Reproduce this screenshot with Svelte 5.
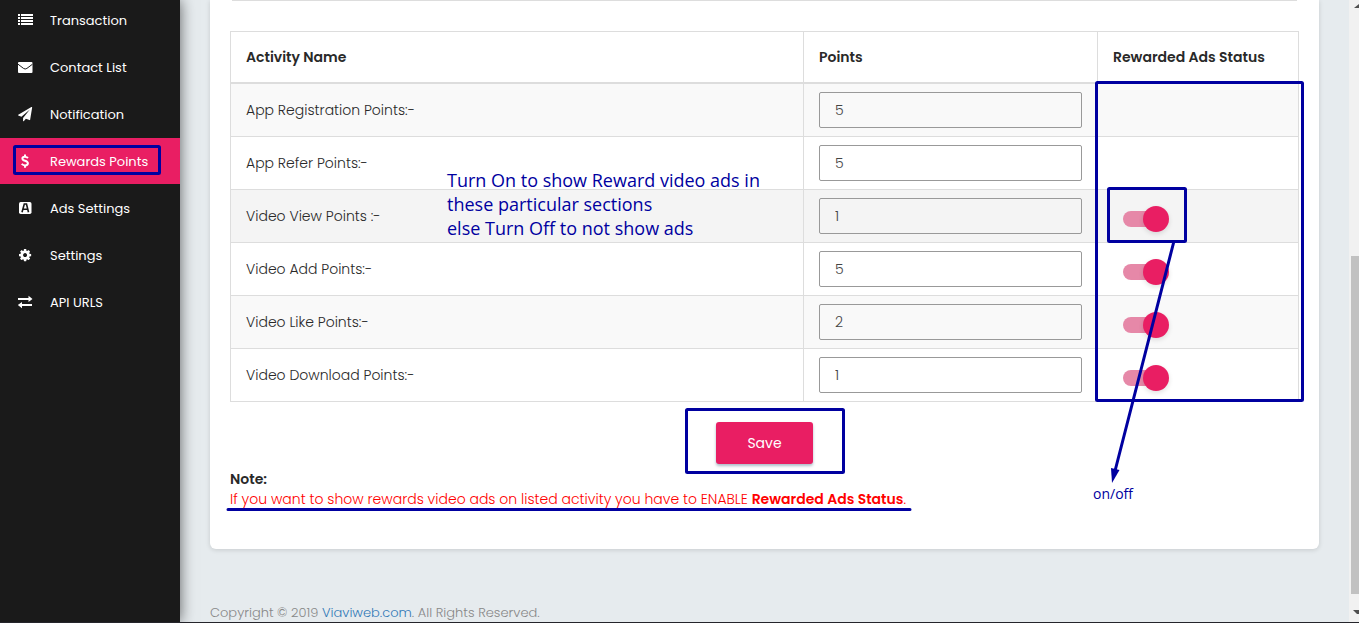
<script>
  const menu = [
    { label: 'Transaction', icon: 'list' },
    { label: 'Contact List', icon: 'envelope' },
    { label: 'Notification', icon: 'plane' },
    { label: 'Rewards Points', icon: 'dollar', active: true },
    { label: 'Ads Settings', icon: 'ads' },
    { label: 'Settings', icon: 'cog' },
    { label: 'API URLS', icon: 'exchange' }
  ];

  let rows = $state([
    { id: 'registration', label: 'App Registration Points:-', points: '5' },
    { id: 'refer', label: 'App Refer Points:-', points: '5' },
    { id: 'view', label: 'Video View Points :-', points: '1', ads: true, hover: true },
    { id: 'add', label: 'Video Add Points:-', points: '5', ads: true },
    { id: 'like', label: 'Video Like Points:-', points: '2', ads: true },
    { id: 'download', label: 'Video Download Points:-', points: '1', ads: true }
  ]);
</script>

<div class="page">
  <nav class="sidebar">
    <ul>
      {#each menu as item}
        <li>
          <a href="#{item.icon}" class:active={item.active}>
            <svg class="icon" viewBox="0 0 16 16" aria-hidden="true">
              {#if item.icon === 'list'}
                <path d="M1 2h2v2H1zM4 2h12v2H4zM1 5h2v2H1zM4 5h12v2H4zM1 8h2v2H1zM4 8h12v2H4zM1 11h2v2H1zM4 11h12v2H4z" />
              {:else if item.icon === 'envelope'}
                <rect x="1" y="3" width="14.500" height="11" rx="1" />
                <path class="cut fold" d="M1 5.200l5.500 4.200q1.700 1.200 3.400 0L15.500 5.200" />
              {:else if item.icon === 'plane'}
                <path transform="translate(1 1) scale(.0079)" d="M1764 11q33 24 27 64l-256 1536q-5 29-32 45-14 8-31 8-11 0-24-5l-453-185-242 295q-18 23-49 23-13 0-22-4-19-7-30.500-23.500t-11.500-36.500v-349l864-1059-1069 925-395-162q-37-14-40-55-2-40 32-59l1664-960q15-9 32-9 20 0 36 11z" />
              {:else if item.icon === 'dollar'}
                <path class="stroke" d="M11 5Q9.600 3.700 7.800 3.700 5.400 3.700 5.400 5.500 5.400 7 8 7.700 10.900 8.500 10.900 10.300 10.900 12.400 8.200 12.400 6.200 12.400 4.700 10.900M8 1.500v2.500M8 12v2.700" />
              {:else if item.icon === 'ads'}
                <rect x="2" y="2" width="12.500" height="12" rx="1.700" />
                <path class="cut" d="M5 12.300L7.300 4h2.200l2 8.300M6.300 9.300h4.500" />
              {:else if item.icon === 'cog'}
                <path transform="translate(1 1) scale(.0079)" d="M1152 896q0-106-75-181t-181-75-181 75-75 181 75 181 181 75 181-75 75-181zm512-109v222q0 12-8 23t-20 13l-185 28q-19 54-39 91 35 50 107 138 10 12 10 25t-9 23q-27 37-99 108t-94 71q-12 0-26-9l-138-108q-44 23-91 38-16 136-29 186-7 28-36 28h-222q-14 0-24.500-8.500t-11.500-21.500l-28-184q-49-16-90-37l-141 107q-10 9-25 9-14 0-25-11-126-114-165-168-7-10-7-23 0-12 8-23 15-21 51-66.500t54-70.500q-27-50-41-99l-183-27q-13-2-21-12.500t-8-23.500v-222q0-12 8-23t19-13l186-28q14-46 39-92-40-57-107-138-10-12-10-24 0-10 9-23 26-36 98.500-107.500t94.500-71.500q13 0 26 10l138 107q44-23 91-38 16-136 29-186 7-28 36-28h222q14 0 24.500 8.500t11.500 21.500l28 184q49 16 90 37l142-107q9-9 24-9 13 0 25 10 129 119 165 170 7 8 7 22 0 12-8 23-15 21-51 66.500t-54 70.500q26 50 41 98l183 28q13 2 21 12.500t8 23.500z" />
              {:else}
                <path d="M1 4h10.500V1.800L15.500 5l-4 3V6H1zM15 10H5V8L.8 11 5 14.200V12h10z" />
              {/if}
            </svg>
            <span>{item.label}</span>
          </a>
        </li>
      {/each}
    </ul>
  </nav>

  <main>
    <section class="card">
      <div class="panel-end"></div>
      <table>
        <colgroup>
          <col />
          <col class="points-col" />
          <col class="status-col" />
        </colgroup>
        <thead>
          <tr><th>Activity Name</th><th>Points</th><th>Rewarded Ads Status</th></tr>
        </thead>
        <tbody>
          {#each rows as row}
            <tr class:hover={row.hover}>
              <td><label for={row.id}>{row.label}</label></td>
              <td><input class="points" id={row.id} type="text" bind:value={row.points} /></td>
              <td>
                {#if row.ads !== undefined}
                  <input class="switch" type="checkbox" aria-label="Rewarded ads" bind:checked={row.ads} />
                {/if}
              </td>
            </tr>
          {/each}
        </tbody>
      </table>
      <button type="button">Save</button>
      <p class="note">
        <strong>Note:</strong><br />
        <span>If you want to show rewards video ads on listed activity you have to ENABLE <b>Rewarded Ads Status</b>.</span>
      </p>
    </section>
    <footer>Copyright © 2019 <a href="#viaviweb">Viaviweb.com</a>. All Rights Reserved.</footer>
  </main>

  <div class="scrollbar" aria-hidden="true">
    <svg viewBox="0 0 10 16"><path d="M5 8l5-4v4z" /></svg>
    <div class="track"><div class="thumb"></div></div>
    <svg viewBox="0 0 10 16"><path d="M4 4h6v4H8z" /></svg>
  </div>

  <svg class="marks" aria-hidden="true">
    <rect x="14.500" y="146.500" width="145" height="27" rx="1" />
    <rect x="1096.500" y="82.500" width="206" height="318" rx="1" />
    <rect x="1108.500" y="188.500" width="77" height="53" rx="1" />
    <rect x="686.500" y="409.500" width="157" height="63" rx="1" />
    <path d="M228 509.500H910M1173.500 243L1115 471" />
    <path class="head" d="M1111 468l8.500 2-7.500 13z" />
  </svg>
  <p class="callout hint">Turn On to show Reward video ads in<br />these particular sections<br />else Turn Off to not show ads</p>
  <p class="callout toggle-hint">on/off</p>
</div>

<style>
  :global(body) {
    margin: 0;
    background: #e6ebee;
  }
  .page, .page * {
    box-sizing: border-box;
  }
  .page {
    position: relative;
    display: flex;
    min-height: 100vh;
    overflow: hidden;
    border-bottom: 1px solid #25252b;
    background: #e6ebee;
    color: #292929;
    font: 300 14px/20px Poppins, Inter, sans-serif;
  }
  .sidebar {
    flex: 0 0 180px;
    background: #1a1a1a;
    box-shadow: 0 0 14px rgba(0, 0, 0, .6);
  }
  ul {
    display: flex;
    flex-direction: column;
    gap: 1px;
    margin: -3px 0 0;
    padding: 0;
    list-style: none;
  }
  .sidebar a {
    display: flex;
    align-items: center;
    gap: 17px;
    height: 46px;
    padding-left: 17px;
    color: #fff;
    font-size: 13px;
    font-weight: 400;
    text-decoration: none;
  }
  .sidebar a.active {
    background: #e91e63;
  }
  .sidebar span {
    padding-top: 2px;
  }
  .icon {
    width: 16px;
    height: 16px;
    fill: #fff;
  }
  .stroke {
    fill: none;
    stroke: #fff;
    stroke-width: 2;
  }
  .cut {
    fill: none;
    stroke: #1a1a1a;
    stroke-width: 1.6;
  }
  .fold {
    stroke-width: 1;
  }
  main {
    flex: 1;
    min-width: 0;
    padding: 0 30px;
  }
  .card {
    padding: 0 20px 40px;
    border-radius: 0 0 6px 6px;
    background: #fff;
    box-shadow: 0 1px 5px rgba(0, 0, 0, .14);
  }
  .panel-end {
    height: 1px;
    margin: 0 2px 30px;
    background: #ddd;
  }
  table {
    width: 100%;
    border-collapse: collapse;
    table-layout: fixed;
  }
  .points-col {
    width: 294px;
  }
  .status-col {
    width: 201px;
  }
  th, td {
    border: 1px solid #ddd;
    padding: 8px 15px;
    text-align: left;
  }
  th {
    padding: 15px;
    border-bottom-width: 2px;
    font-weight: 600;
  }
  td {
    height: 53px;
  }
  tbody tr:nth-child(odd) {
    background: #f9f9f9;
  }
  tbody tr.hover:nth-child(odd) {
    background: #f4f4f4;
  }
  .points {
    display: block;
    width: 100%;
    height: 36px;
    padding: 0 15px;
    border: 1px solid #999;
    border-radius: 2px;
    background: transparent;
    color: #444;
    font: inherit;
  }
  .switch {
    position: relative;
    display: block;
    appearance: none;
    width: 40px;
    height: 16px;
    margin: 6px 0 0 10px;
    border-radius: 8px;
    background: #e688a8;
  }
  .switch::before {
    content: '';
    position: absolute;
    top: -5px;
    left: 20px;
    width: 26px;
    height: 26px;
    border-radius: 50%;
    background: #e91e63;
    box-shadow: 0 2px 5px rgba(0, 0, 0, .12);
  }
  .switch:not(:checked)::before {
    left: -6px;
  }
  button {
    display: block;
    height: 42px;
    margin: 20px auto 5px;
    padding: 0 31px;
    border: 0;
    border-radius: 3px;
    background: #e91e63;
    box-shadow: 0 2px 3px rgba(50, 90, 120, .4);
    color: #fff;
    font: inherit;
    font-weight: 400;
  }
  .note {
    margin: 0;
  }
  .note strong, .note b {
    font-weight: 600;
  }
  .note span {
    color: #f00;
  }
  footer {
    padding-top: 54px;
    height: 73px;
    color: #888;
    font-size: 13px;
  }
  footer a {
    color: #337ab7;
    text-decoration: none;
  }
  .scrollbar {
    display: flex;
    flex: 0 0 10px;
    flex-direction: column;
    background: #f1f1f1;
  }
  .scrollbar svg {
    height: 16px;
    fill: #505050;
  }
  .track {
    display: flex;
    flex: 1;
    flex-direction: column;
    justify-content: flex-end;
    padding: 0 0 12px 2px;
  }
  .thumb {
    height: 58.5%;
    background: #c1c1c1;
  }
  .marks {
    position: absolute;
    inset: 0;
    width: 100%;
    height: 100%;
    fill: none;
    stroke: #0000a0;
    stroke-width: 3;
    stroke-linecap: round;
    pointer-events: none;
  }
  .marks .head {
    fill: #0000a0;
    stroke: none;
  }
  .callout {
    position: absolute;
    margin: 0;
    color: #0000a0;
    font-family: "Open Sans", sans-serif;
    font-weight: 400;
    pointer-events: none;
  }
  .hint {
    top: 168px;
    left: 447px;
    font-size: 18px;
    line-height: 24px;
  }
  .toggle-hint {
    top: 484px;
    left: 1093px;
    font-size: 14px;
  }
</style>
